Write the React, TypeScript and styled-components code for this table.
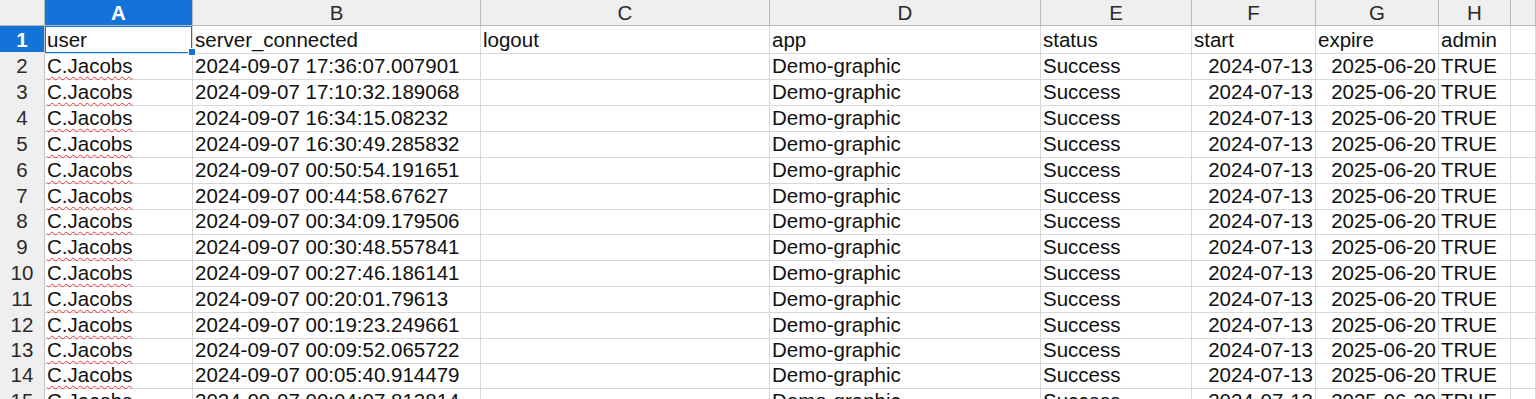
import React from "react";
import styled, { createGlobalStyle, css } from "styled-components";

const GlobalStyle = createGlobalStyle`
  html, body {
    margin: 0;
    padding: 0;
    background: #ffffff;
    overflow: hidden;
  }
  body {
    font-family: "Liberation Sans", Arial, sans-serif;
  }
`;

const COLS = "45px 148px 288px 289px 271px 151px 124px 123px 72px 1fr";
const SELECT_BLUE = "#1373d9";

const Sheet = styled.div`
  width: 1536px;
  height: 399px;
  overflow: hidden;
  display: flex;
  flex-direction: column;
  background: #fff;
`;

const Row = styled.div<{ $height: number }>`
  display: grid;
  grid-template-columns: ${COLS};
  height: ${(p) => p.$height}px;
  flex: 0 0 auto;
`;

const HeadCell = styled.div<{ $active?: boolean }>`
  box-sizing: border-box;
  background: ${(p) => (p.$active ? SELECT_BLUE : "#efefef")};
  color: ${(p) => (p.$active ? "#fff" : "#2a2a2a")};
  font-weight: ${(p) => (p.$active ? "bold" : "normal")};
  font-size: 20.5px;
  line-height: 26px;
  text-align: center;
  border-right: 1px solid #b8b8b8;
  border-bottom: 1px solid #b8b8b8;
  overflow: hidden;
`;

const RowNum = styled(HeadCell)`
  border-right: 1px solid #c4c4c4;
  border-bottom: 1px solid #d2d2d2;
  padding-top: 1px;
`;

const Cell = styled.div<{ $align?: "left" | "right"; $selected?: boolean }>`
  position: relative;
  box-sizing: border-box;
  border-right: 1px solid #d8d8d8;
  border-bottom: 1px solid #d8d8d8;
  font-size: 20.5px;
  line-height: 26px;
  padding: 1px 2px 0 2px;
  color: #111;
  white-space: nowrap;
  overflow: visible;
  text-align: ${(p) => p.$align ?? "left"};
  ${(p) =>
    p.$selected &&
    css`
      z-index: 2;
      box-shadow: inset 0 0 0 1px ${SELECT_BLUE};
    `}
`;

const Wavy = styled.span`
  text-decoration: underline wavy #e23a3a;
  text-decoration-thickness: 1px;
  text-underline-offset: 3px;
`;

const Handle = styled.span`
  position: absolute;
  right: -4px;
  bottom: -3px;
  width: 6px;
  height: 6px;
  background: ${SELECT_BLUE};
  border: 1px solid #fff;
  box-sizing: content-box;
`;

const letters = ["A", "B", "C", "D", "E", "F", "G", "H", ""];

const stamps = [
  "17:36:07.007901",
  "17:10:32.189068",
  "16:34:15.08232",
  "16:30:49.285832",
  "00:50:54.191651",
  "00:44:58.67627",
  "00:34:09.179506",
  "00:30:48.557841",
  "00:27:46.186141",
  "00:20:01.79613",
  "00:19:23.249661",
  "00:09:52.065722",
  "00:05:40.914479",
  "00:04:07.813814",
];

// row heights as they land on screen (header, row 1, rows 2..15)
const heights = [26, 26, 26, 26, 26, 26, 26, 25, 26, 26, 26, 26, 25, 25, 26, 26];

export default function App() {
  return (
    <>
      <GlobalStyle />
      <Sheet>
        <Row $height={heights[0]}>
          <HeadCell />
          {letters.map((l, i) => (
            <HeadCell key={i} $active={l === "A"}>
              {l}
            </HeadCell>
          ))}
        </Row>

        <Row $height={heights[1]}>
          <RowNum $active>1</RowNum>
          <Cell $selected>
            user
            <Handle />
          </Cell>
          <Cell>server_connected</Cell>
          <Cell>logout</Cell>
          <Cell>app</Cell>
          <Cell>status</Cell>
          <Cell>start</Cell>
          <Cell>expire</Cell>
          <Cell>admin</Cell>
          <Cell />
        </Row>

        {stamps.map((t, i) => (
          <Row key={t} $height={heights[i + 2]}>
            <RowNum>{i + 2}</RowNum>
            <Cell>
              <Wavy>C.Jacobs</Wavy>
            </Cell>
            <Cell>2024-09-07 {t}</Cell>
            <Cell />
            <Cell>Demo-graphic</Cell>
            <Cell>Success</Cell>
            <Cell $align="right">2024-07-13</Cell>
            <Cell $align="right">2025-06-20</Cell>
            <Cell>TRUE</Cell>
            <Cell />
          </Row>
        ))}
      </Sheet>
    </>
  );
}
